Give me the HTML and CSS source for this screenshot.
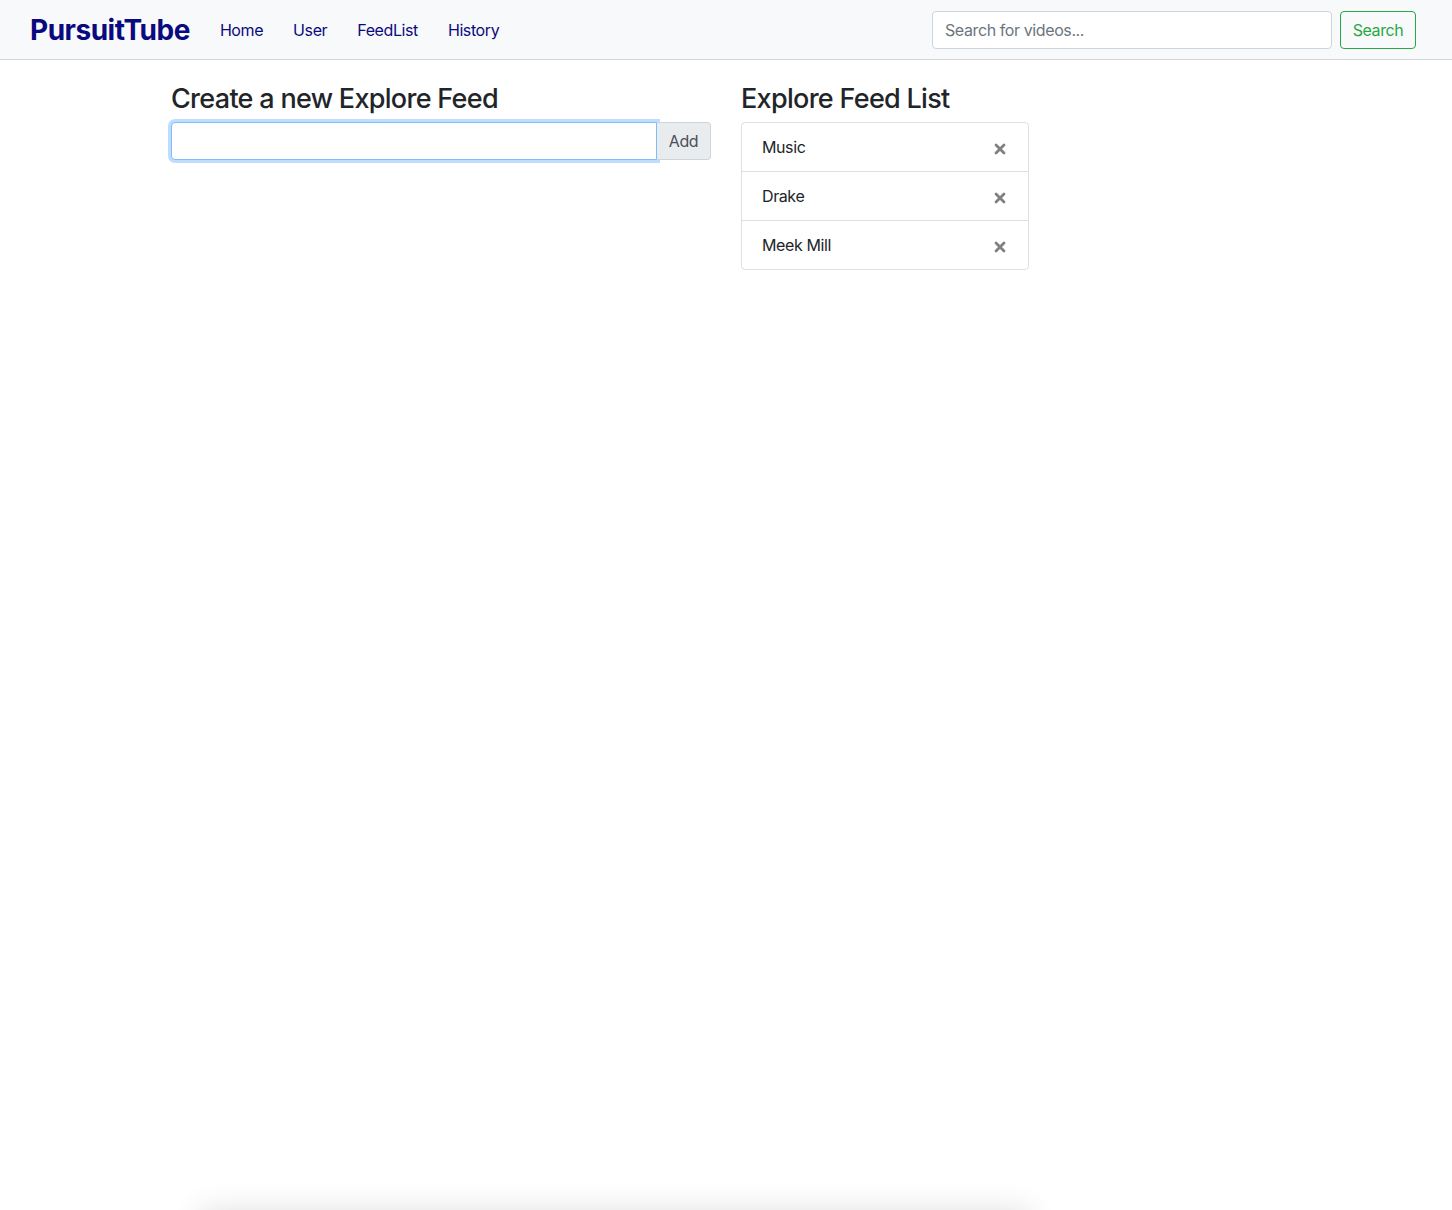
FILE: index.html
```html
<!DOCTYPE html>
<html>
<head>
<meta charset="utf-8">
<link rel="stylesheet" href="styles.css">
</head>
<body>
<nav class="navbar">
  <a class="brand" href="#">PursuitTube</a>
  <ul class="nav">
    <li><a href="#">Home</a></li>
    <li><a href="#">User</a></li>
    <li><a href="#">FeedList</a></li>
    <li><a href="#">History</a></li>
  </ul>
  <form class="search">
    <input class="search-input" type="text" placeholder="Search for videos...">
    <button class="search-btn" type="button">Search</button>
  </form>
</nav>
<main class="container">
  <section class="col-create">
    <h3 class="title">Create a new Explore Feed</h3>
    <div class="input-group">
      <input class="feed-input" type="text">
      <button class="add-btn" type="button">Add</button>
    </div>
  </section>
  <section class="col-list">
    <h3 class="title">Explore Feed List</h3>
    <ul class="list">
      <li class="item"><span>Music</span><svg class="x" viewBox="0 0 12 12" width="12" height="12"><path d="M2 2 L10 10 M10 2 L2 10" stroke="#808080" stroke-width="2.8" stroke-linecap="round"/></svg></li>
      <li class="item"><span>Drake</span><svg class="x" viewBox="0 0 12 12" width="12" height="12"><path d="M2 2 L10 10 M10 2 L2 10" stroke="#808080" stroke-width="2.8" stroke-linecap="round"/></svg></li>
      <li class="item"><span>Meek Mill</span><svg class="x" viewBox="0 0 12 12" width="12" height="12"><path d="M2 2 L10 10 M10 2 L2 10" stroke="#808080" stroke-width="2.8" stroke-linecap="round"/></svg></li>
    </ul>
  </section>
</main>
<div class="footer-shadow"></div>
</body>
</html>
```
FILE: styles.css
```css
* { box-sizing: border-box; }
html, body { margin: 0; padding: 0; }
body {
  font-family: Inter, "Liberation Sans", sans-serif;
  font-size: 16px;
  line-height: 1.5;
  letter-spacing: -0.4px;
  color: #212529;
  background: #fff;
  overflow: hidden;
  height: 1210px;
}
.navbar {
  display: flex;
  align-items: center;
  height: 60px;
  padding: 0 36px 0 30px;
  background: #f8f9fa;
  border-bottom: 1px solid #d6d6d6;
}
.brand {
  font-size: 28px;
  font-weight: 700;
  color: #0a0a80;
  text-decoration: none;
  letter-spacing: -0.5px;
  margin-right: 15px;
  line-height: 1;
}
.nav {
  display: flex;
  list-style: none;
  margin: 0;
  padding: 0;
  flex: 1;
}
.nav a {
  display: block;
  padding: 0 15px;
  color: #0a0a80;
  text-decoration: none;
  font-size: 16px;
}
.search { display: flex; align-items: center; }
.search-input {
  width: 400px;
  height: 38px;
  padding: 6px 12px;
  font: inherit;
  font-size: 16px;
  letter-spacing: -0.4px;
  color: #495057;
  border: 1px solid #ced4da;
  border-radius: 4px;
  background: #fff;
  margin-right: 8px;
}
.search-input::placeholder { color: #6c757d; }
.search-btn {
  height: 38px;
  width: 76px;
  padding: 6px 0;
  font: inherit;
  font-size: 16px;
  letter-spacing: -0.4px;
  color: #28a745;
  background: transparent;
  border: 1px solid #28a745;
  border-radius: 4px;
}
.container {
  display: flex;
  gap: 30px;
  padding: 22px 0 0 171px;
  height: 1150px;
}
.col-create { width: 540px; }
.col-list { width: 288px; }
.title {
  margin: 0 0 6px;
  font-size: 27px;
  font-weight: 500;
  line-height: 34px;
  letter-spacing: -0.7px;
}
.input-group { display: flex; }
.feed-input {
  flex: 1;
  height: 38px;
  font: inherit;
  border: 1px solid #80bdff;
  border-radius: 4px 0 0 4px;
  box-shadow: 0 0 0 3px rgba(0,123,255,.25);
  outline: none;
  padding: 6px 12px;
}
.add-btn {
  width: 54px;
  height: 38px;
  font: inherit;
  font-size: 16px;
  letter-spacing: -0.4px;
  color: #495057;
  background: #e9ecef;
  border: 1px solid #ced4da;
  border-left: 0;
  border-radius: 0 4px 4px 0;
  padding: 6px 0;
}
.list {
  list-style: none;
  margin: 0;
  padding: 0;
  border: 1px solid rgba(0,0,0,.125);
  border-radius: 4px;
}
.item {
  display: flex;
  align-items: center;
  justify-content: space-between;
  height: 49px;
  padding: 0 22px 0 20px;
  border-bottom: 1px solid rgba(0,0,0,.125);
}
.item:last-child { border-bottom: 0; height: 48px; }
.item span { margin-top: -1px; }
.x { margin-top: 4px; }
.footer-shadow {
  width: 830px;
  height: 40px;
  margin-left: 200px;
  box-shadow: 0 0 30px rgba(0,0,0,.12);
}
```
